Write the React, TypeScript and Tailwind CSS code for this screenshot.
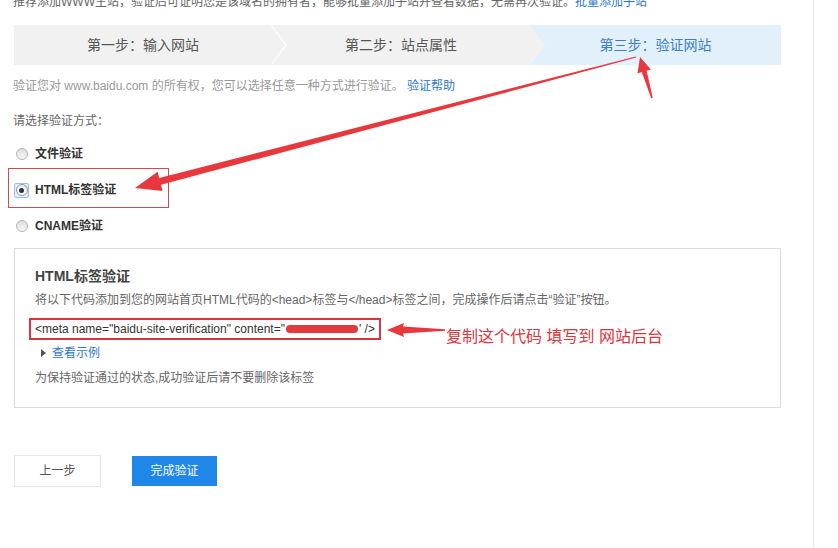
import React from "react";

const font = { fontFamily: '"Liberation Sans", "Noto Sans CJK SC", sans-serif' };

function Radio({ checked }: { checked?: boolean }) {
  if (checked) {
    return (
      <span className="flex h-[15px] w-[15px] items-center justify-center rounded-[2px] border border-[#9fbde3] bg-[#e8f0fb]">
        <span className="flex h-[12px] w-[12px] items-center justify-center rounded-full border border-[#8a9bb0] bg-gradient-to-b from-[#e6ecf4] to-[#ffffff]">
          <span className="h-[5px] w-[5px] rounded-full bg-[#333]" />
        </span>
      </span>
    );
  }
  return (
    <span className="flex h-[15px] w-[15px] items-center justify-center">
      <span className="h-[12px] w-[12px] rounded-full border border-[#b4b4b4] bg-gradient-to-b from-[#dedede] to-[#f8f8f8]" />
    </span>
  );
}

export default function App() {
  return (
    <div className="relative h-[548px] w-[838px] overflow-hidden bg-white" style={font}>
      <div className="flex h-full">
        <div className="w-[814px] border-r border-[#e6e6e6] pl-[14px] pr-[32px]">
          <div className="-ml-[1px] -mt-[7px] whitespace-nowrap text-[12px] leading-[18px] text-[#666]">
            推荐添加WWW主站，验证后可证明您是该域名的拥有者，能够批量添加子站并查看数据，无需再次验证。
            <span className="text-[#2f78c8]">批量添加子站</span>
          </div>

          <div className="mt-[14px] flex h-10 bg-[#f1f1f1] text-[14px] text-[#555]">
            <div className="relative flex w-[258px] items-center justify-center">
              第一步：输入网站
              <svg className="absolute right-[-15px] top-0" width="16" height="40" viewBox="0 0 16 40">
                <polyline points="0,0 15,20 0,40" fill="none" stroke="#fbfbfb" strokeWidth="1.5" />
              </svg>
            </div>
            <div className="relative flex w-[258px] items-center justify-center">
              第二步：站点属性
              <svg className="absolute right-[-15px] top-0 z-10" width="15" height="40" viewBox="0 0 15 40">
                <polygon points="0,0 15,20 0,40" fill="#f1f1f1" />
              </svg>
            </div>
            <div className="flex flex-1 items-center justify-center bg-[#e2f0fc] text-[#3c7fc8]">
              第三步：验证网站
            </div>
          </div>

          <div className="-ml-[1px] mt-[12px] text-[12px] leading-[18px] text-[#999]">
            验证您对 www.baidu.com 的所有权，您可以选择任意一种方式进行验证。{" "}
            <span className="text-[#2f78c8]">验证帮助</span>
          </div>

          <div className="-ml-[1px] mt-[17px] text-[12px] leading-[18px] text-[#666]">请选择验证方式：</div>

          <div className="mt-[6px]">
            <div className="flex h-[36px] items-center gap-[6px] text-[12px] font-bold text-[#333]">
              <Radio />
              <span>文件验证</span>
            </div>
            <div className="relative flex h-[36px] items-center gap-[6px] text-[12px] font-bold text-[#333]">
              <div className="absolute left-[-6px] top-[-4px] h-[40px] w-[161px] border border-[#d8454a]" />
              <Radio checked />
              <span>HTML标签验证</span>
            </div>
            <div className="flex h-[36px] items-center gap-[6px] text-[12px] font-bold text-[#333]">
              <Radio />
              <span>CNAME验证</span>
            </div>
          </div>

          <div className="mt-[4px] h-[160px] border border-[#dcdcdc] pl-[20px] pt-[17px]">
            <div className="text-[14px] font-bold leading-[20px] text-[#444]">HTML标签验证</div>
            <div className="mt-[5px] text-[12px] leading-[18px] text-[#666]">
              将以下代码添加到您的网站首页HTML代码的&lt;head&gt;标签与&lt;/head&gt;标签之间，完成操作后请点击“验证”按钮。
            </div>
            <div className="-ml-[6px] mt-[9px] inline-flex h-[22px] items-center border-2 border-[#d8363c] pl-[4px] pr-[4px] text-[12px] text-[#333]">
              &lt;meta name="baidu-site-verification" content="
              <span className="mx-[1px] inline-block h-[8px] w-[72px] rounded-full bg-[#e33a3f]" />
              ' /&gt;
            </div>
            <div className="mt-[4px] flex items-center pl-[6px] text-[12px] leading-[18px] text-[#2f78c8]">
              <span className="mr-[6px] inline-block h-0 w-0 border-y-[4px] border-l-[5px] border-y-transparent border-l-[#555]" />
              查看示例
            </div>
            <div className="mt-[7px] text-[12px] leading-[18px] text-[#666]">为保持验证通过的状态,成功验证后请不要删除该标签</div>
          </div>

          <div className="mt-[47px] flex items-center gap-[31px] text-[12px]">
            <div className="flex h-[32px] w-[87px] items-center justify-center border border-[#e6e6e6] text-[#555]">上一步</div>
            <div className="flex h-[30px] w-[85px] items-center justify-center bg-[#1f87e8] text-white">完成验证</div>
          </div>
        </div>
        <div className="flex-1 bg-white" />
      </div>

      <div className="absolute left-[446px] top-[326px] whitespace-nowrap text-[16px] leading-[22px] text-[#d9363c]">
        复制这个代码 填写到 网站后台
      </div>

      <svg className="pointer-events-none absolute left-0 top-0" width="838" height="548" viewBox="0 0 838 548">
        <polygon
          points="636.2,57.6 161,184.8 162.6,191.1 135,188 157.6,171.7 159.2,178 635.8,56.4"
          fill="#e8383d"
        />
        <polygon
          points="646.6,70.7 650.9,69.4 640,57 637.5,73.4 641.8,72.1 651.2,98.2 652.8,97.8"
          fill="#e8383d"
        />
        <polygon points="387,330 404,323 403,326.5 445,329.3 445,330.7 403,333.5 404,337" fill="#e8383d" />
      </svg>
    </div>
  );
}
